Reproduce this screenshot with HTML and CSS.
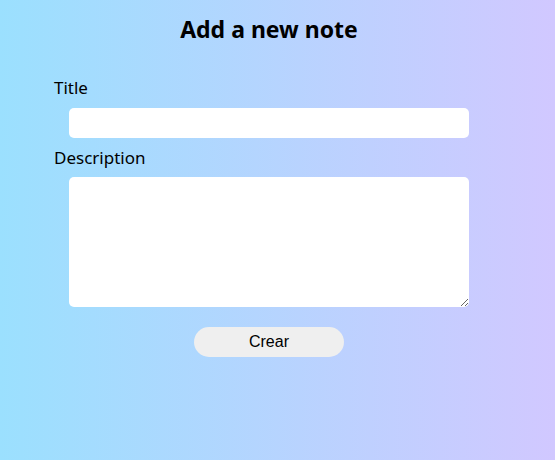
FILE: index.html
```html
<!DOCTYPE html>
<html>
<head>
<meta charset="utf-8">
<link rel="stylesheet" href="styles.css">
</head>
<body>
<div class="page">
  <form class="note-form">
    <h1 class="heading">Add a new note</h1>
    <label class="label" for="title">Title</label>
    <input class="field" id="title" type="text">
    <label class="label" for="desc">Description</label>
    <textarea class="field area" id="desc"></textarea>
    <div class="actions">
      <button class="btn" type="button">Crear</button>
    </div>
  </form>
</div>
</body>
</html>
```

FILE: styles.css
```css
html, body {
  margin: 0;
  height: 100%;
}
body {
  background: linear-gradient(to right, #9be0fe, #d1c8ff);
  font-family: "Noto Sans", "Open Sans", sans-serif;
  color: #000;
}
.page {
  padding: 0 0 0 54px;
}
.note-form {
  width: 430px;
  display: flex;
  flex-direction: column;
}
.heading {
  margin: 14px 0 0 0;
  font-size: 23px;
  line-height: 30px;
  font-weight: 700;
  text-align: center;
}
.label {
  display: block;
  font-size: 17px;
  line-height: 22px;
  margin-top: 33px;
  margin-bottom: 9px;
}
.field {
  display: block;
  box-sizing: border-box;
  width: 400px;
  height: 30px;
  margin: 0 15px;
  border: none;
  border-radius: 5px;
  background: #fff;
  padding: 4px 8px;
  font: 14px "Liberation Sans", Arial, sans-serif;
  outline: none;
}
.field + .label {
  margin-top: 9px;
  margin-bottom: 8px;
}
.area {
  height: 130px;
  resize: both;
}
.actions {
  display: flex;
  justify-content: center;
  margin-top: 20px;
}
.btn {
  width: 150px;
  height: 30px;
  border: none;
  border-radius: 15px;
  background: #efefef;
  font: 16px "Liberation Sans", Arial, sans-serif;
  color: #000;
  padding: 0;
}
```
